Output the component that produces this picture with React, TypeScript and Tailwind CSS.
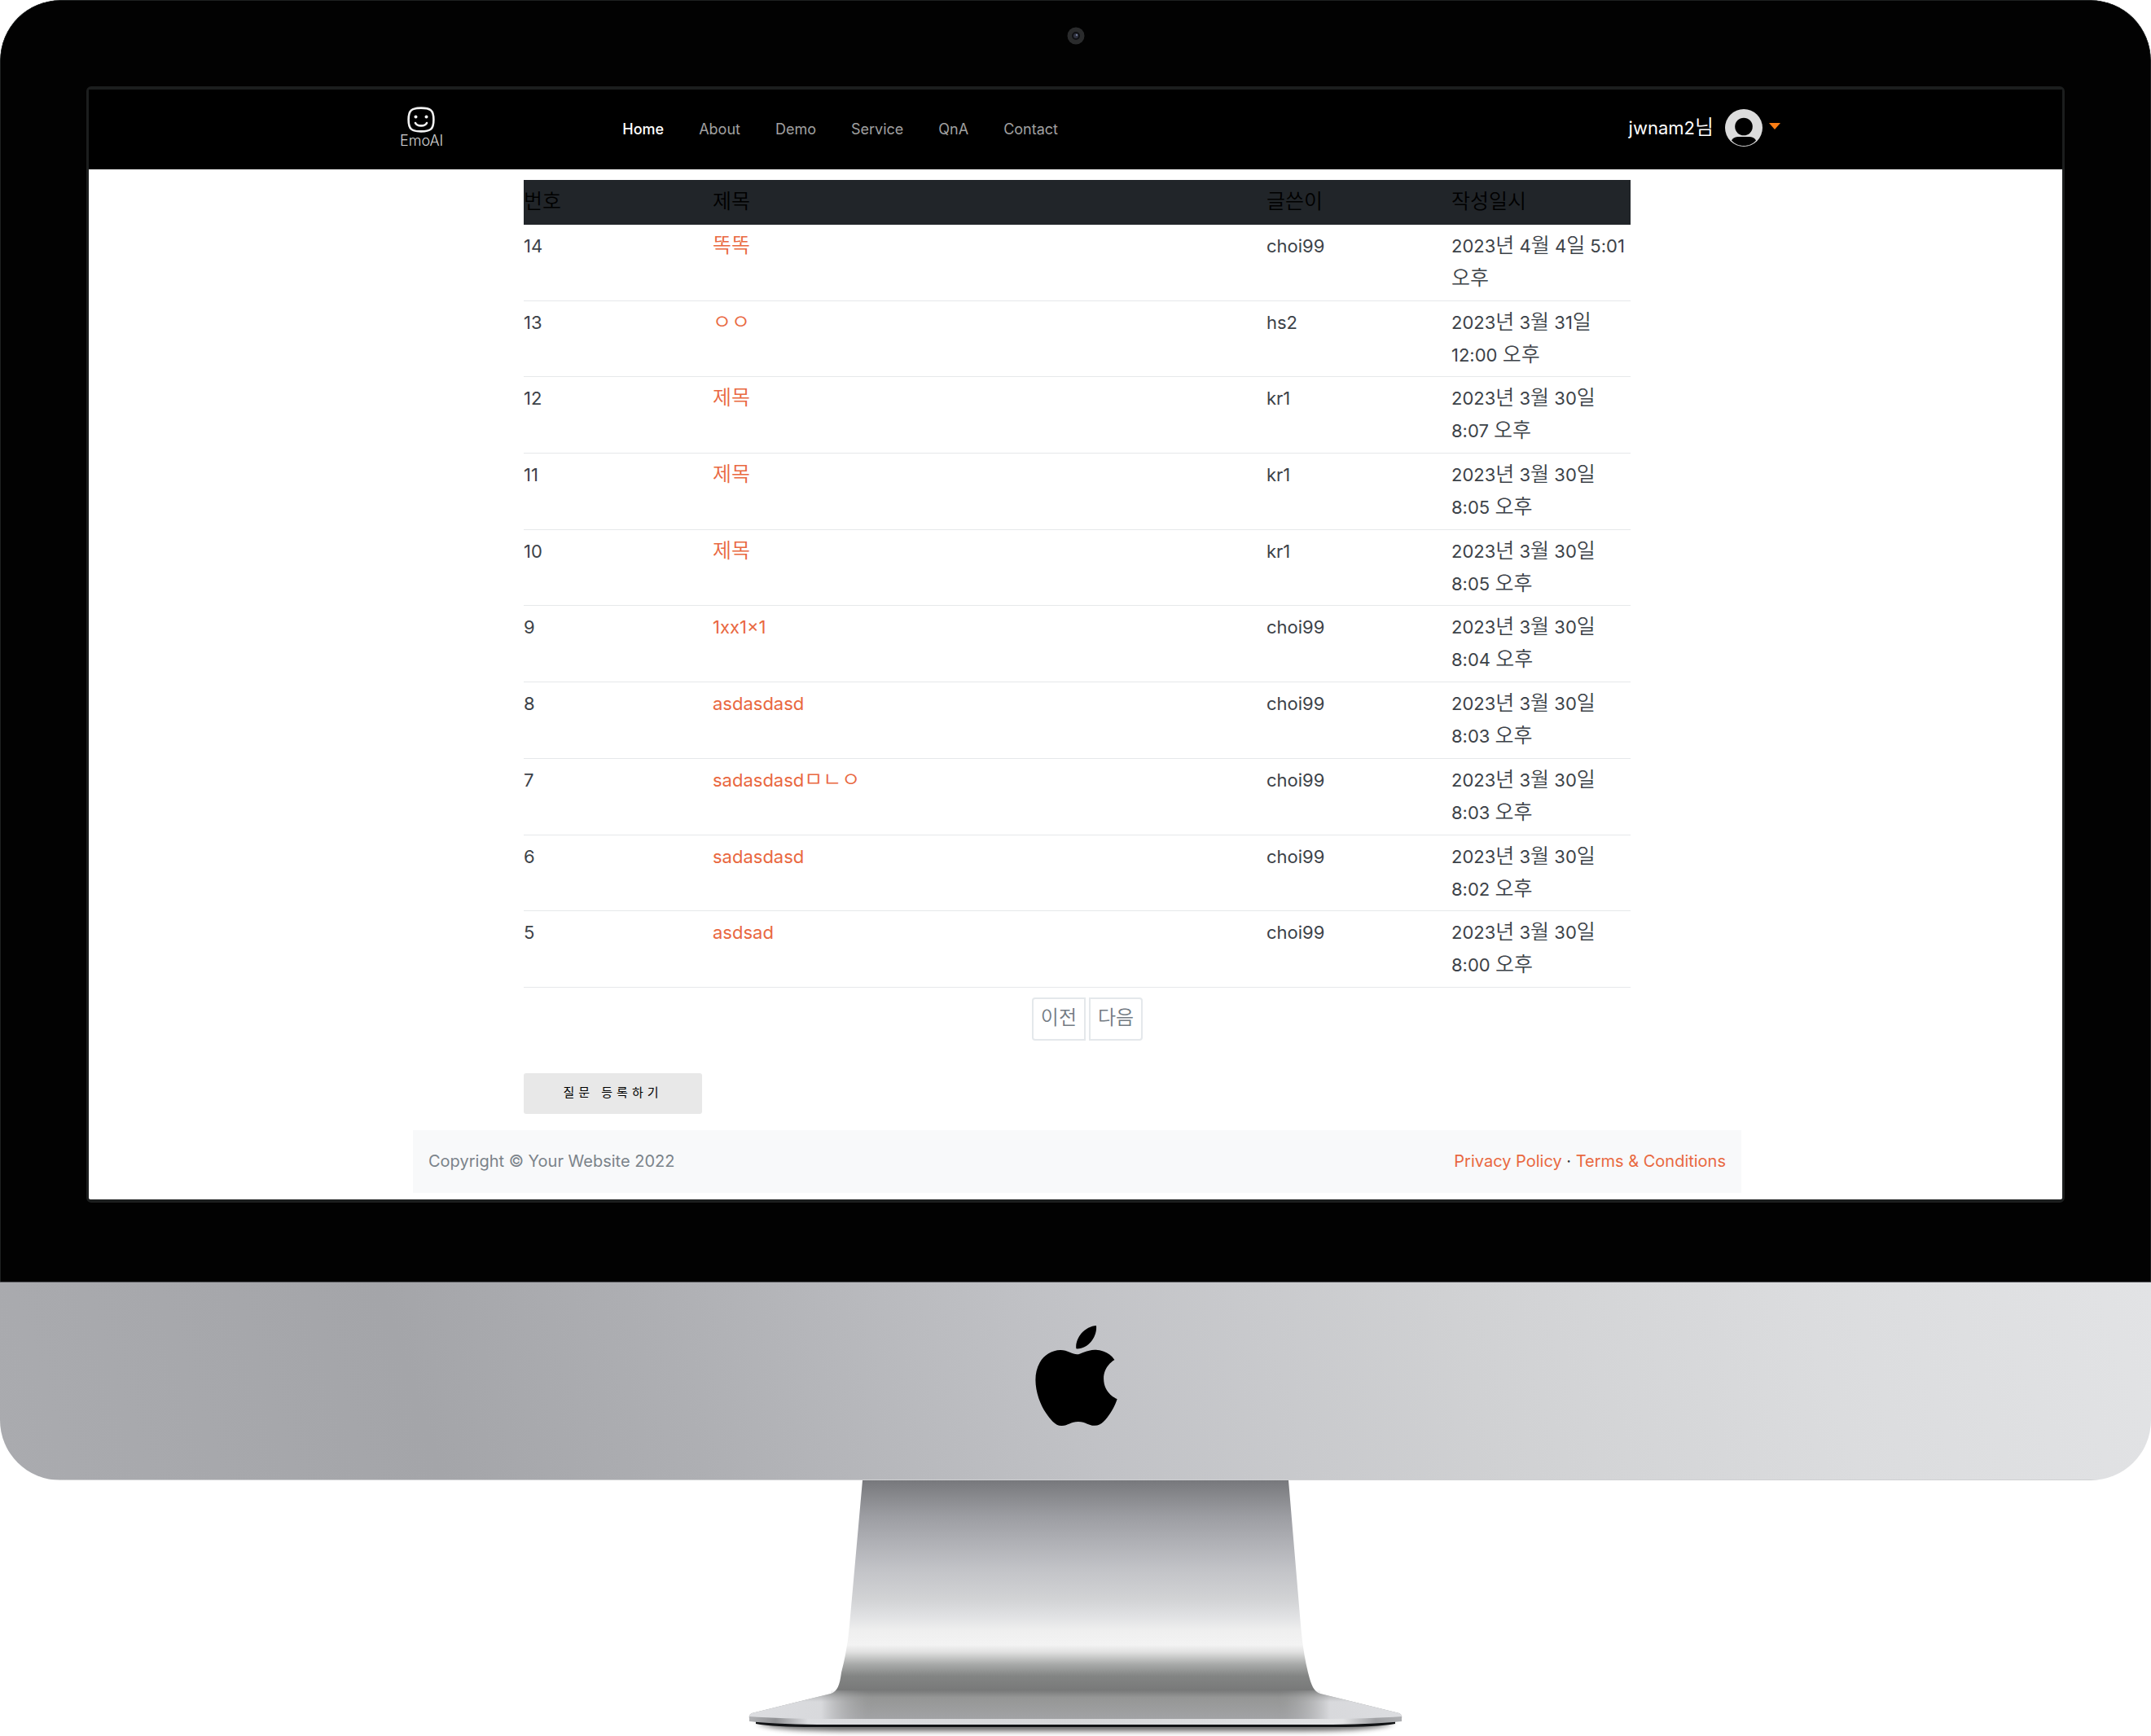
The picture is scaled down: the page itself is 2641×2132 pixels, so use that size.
import React from "react";
import { SiApple } from "react-icons/si";

type Post = { id: number; title: string; author: string; date: string };

const posts: Post[] = [
  { id: 14, title: "똑똑", author: "choi99", date: "2023년 4월 4일 5:01 오후" },
  { id: 13, title: "ㅇㅇ", author: "hs2", date: "2023년 3월 31일 12:00 오후" },
  { id: 12, title: "제목", author: "kr1", date: "2023년 3월 30일 8:07 오후" },
  { id: 11, title: "제목", author: "kr1", date: "2023년 3월 30일 8:05 오후" },
  { id: 10, title: "제목", author: "kr1", date: "2023년 3월 30일 8:05 오후" },
  { id: 9, title: "1xx1×1", author: "choi99", date: "2023년 3월 30일 8:04 오후" },
  { id: 8, title: "asdasdasd", author: "choi99", date: "2023년 3월 30일 8:03 오후" },
  { id: 7, title: "sadasdasdㅁㄴㅇ", author: "choi99", date: "2023년 3월 30일 8:03 오후" },
  { id: 6, title: "sadasdasd", author: "choi99", date: "2023년 3월 30일 8:02 오후" },
  { id: 5, title: "asdsad", author: "choi99", date: "2023년 3월 30일 8:00 오후" },
];

const navItems = ["Home", "About", "Demo", "Service", "QnA", "Contact"];

/* Sets Hangul runs slightly larger than the Latin text around them. */
function Mixed({ text }: { text: string }) {
  return (
    <>
      {text.split(/([ㄱ-ㅎ가-힣]+)/).map((part, i) =>
        i % 2 ? (
          <span key={i} className="text-[25px] leading-none font-[350]">
            {part}
          </span>
        ) : (
          part
        ),
      )}
    </>
  );
}

function Logo() {
  return (
    <a href="#home" className="flex flex-col items-center text-[#d4d4d4]">
      <svg className="mr-0.5 h-8 w-9" viewBox="0 0 36 32" fill="none" stroke="#f2f2f2" strokeLinecap="round">
        <path
          strokeWidth="2.6"
          d="M18 1.6c11.5 0 15.4 2.6 15.4 14.4S29.500 30.400 18 30.400 2.600 27.800 2.600 16 6.500 1.600 18 1.600Z"
        />
        <circle cx="11.500" cy="12.500" r="2" fill="#f2f2f2" stroke="none" />
        <circle cx="24.500" cy="12.500" r="2" fill="#f2f2f2" stroke="none" />
        <path strokeWidth="2.600" d="M11 20c2 4.500 12 4.500 14 0" />
      </svg>
      <span className="text-lg leading-5 font-light">EmoAI</span>
    </a>
  );
}

function Avatar() {
  return (
    <svg className="size-[46px]" viewBox="0 0 46 46">
      <circle cx="23" cy="23" r="23" fill="#dcdcdc" />
      <circle cx="23" cy="21.500" r="10.800" fill="#000" />
      <path d="M8 38.500c2-3.500 5-4.500 9-4.500h12c4 0 7 1 9 4.500C34 43 28.500 45 23 45S12 43 8 38.500Z" fill="#000" />
    </svg>
  );
}

function Header() {
  return (
    <header className="flex h-[98px] items-center bg-black pr-[346px] pb-1 pl-[382px]">
      <Logo />
      <nav className="ml-[220px] flex gap-[43px] pt-1 text-lg">
        {navItems.map((item, i) => (
          <a key={item} href={`#${item}`} className={i === 0 ? "font-medium text-white" : "text-[#a0a0a0]"}>
            {item}
          </a>
        ))}
      </nav>
      <button type="button" className="ml-auto flex items-center text-[22px] text-white">
        <span>
          <Mixed text="jwnam2님" />
        </span>
        <span className="mr-2 ml-3.5">
          <Avatar />
        </span>
        <svg className="mb-1 h-2 w-3.5" viewBox="0 0 14 8">
          <path d="M0 0h14L7 8Z" fill="#fd7e14" />
        </svg>
      </button>
    </header>
  );
}

function Board() {
  return (
    <table className="h-[992px] w-full table-fixed text-left text-[22px] leading-10 break-keep text-[#3c4248]">
      <colgroup>
        <col className="w-[232px]" />
        <col />
        <col className="w-[227px]" />
        <col className="w-[220px]" />
      </colgroup>
      <thead className="bg-[#212529] text-[25px] text-black">
        <tr className="h-[55px]">
          {["번호", "제목", "글쓴이", "작성일시"].map((h) => (
            <th key={h} scope="col" className="pb-1 font-[350]">
              {h}
            </th>
          ))}
        </tr>
      </thead>
      <tbody>
        {posts.map((p) => (
          <tr key={p.id} className="border-b border-[#e6e8ea] align-top">
            <td className="pt-1.5">{p.id}</td>
            <td className="pt-1.5">
              <a href={`#post-${p.id}`} className="text-[#e9683f]">
                <Mixed text={p.title} />
              </a>
            </td>
            <td className="pt-1.5">{p.author}</td>
            <td className="pt-1.5">
              <Mixed text={p.date} />
            </td>
          </tr>
        ))}
      </tbody>
    </table>
  );
}

function Screen() {
  return (
    <div className="rounded-md border-x-[3px] border-y-4 border-[#1c1e1e] bg-white">
      <Header />
      <div className="mx-auto max-w-[1635px] pt-[13px] pb-2 pl-1">
        <main className="px-[136px]">
          <Board />
          <div className="mt-3 flex justify-center gap-1 pl-[25px] text-2xl text-[#737b83]">
            <button type="button" className="h-[53px] rounded-l-sm border-2 border-[#e4e8eb] px-[9px] pb-1 font-[350]">
              이전
            </button>
            <button type="button" className="h-[53px] rounded-r-sm border-2 border-[#e4e8eb] px-[9px] pb-1 font-[350]">
              다음
            </button>
          </div>
          <button
            type="button"
            className="mt-10 mb-5 block h-[50px] w-[219px] rounded-[3px] bg-[#e8e8e8] pb-0.5 text-[15px] tracking-[5px] text-black"
          >
            질문 등록하기
          </button>
        </main>
        <footer className="flex h-[77px] items-center justify-between bg-[#f8f9fa] px-[19px] pb-0.5 text-xl">
          <p className="text-[#7b838a]">Copyright © Your Website 2022</p>
          <p className="text-[#343a40]">
            <a href="#privacy" className="text-[#e9683f]">Privacy Policy</a>
            {" · "}
            <a href="#terms" className="text-[#e9683f]">Terms &amp; Conditions</a>
          </p>
        </footer>
      </div>
    </div>
  );
}

function Stand() {
  return (
    <svg className="mx-auto block w-[841px]" viewBox="0 0 841 314" aria-hidden="true">
      <defs>
        <linearGradient id="neck" gradientUnits="userSpaceOnUse" x1="0" y1="0" x2="0" y2="293">
          <stop offset="0" stopColor="#77787c" />
          <stop offset="0.075" stopColor="#8a8b8f" />
          <stop offset="0.150" stopColor="#9c9da2" />
          <stop offset="0.270" stopColor="#b1b2b7" />
          <stop offset="0.380" stopColor="#c3c4c8" />
          <stop offset="0.500" stopColor="#d2d3d5" />
          <stop offset="0.570" stopColor="#e0e1e3" />
          <stop offset="0.630" stopColor="#efefef" />
          <stop offset="0.690" stopColor="#f3f3f3" />
          <stop offset="0.720" stopColor="#e0e0e0" />
          <stop offset="0.770" stopColor="#a9abaa" />
          <stop offset="0.820" stopColor="#838584" />
          <stop offset="0.880" stopColor="#787979" />
          <stop offset="0.910" stopColor="#959695" />
          <stop offset="1" stopColor="#a2a3a5" />
        </linearGradient>
        <linearGradient id="sides" gradientUnits="userSpaceOnUse" x1="20" y1="0" x2="821" y2="0">
          <stop offset="0" stopColor="#dcdde0" />
          <stop offset="0.110" stopColor="#d8d9dc" />
          <stop offset="0.190" stopColor="#a2a3a5" stopOpacity="0" />
          <stop offset="0.810" stopColor="#a2a3a5" stopOpacity="0" />
          <stop offset="0.890" stopColor="#d8d9dc" />
          <stop offset="1" stopColor="#dcdde0" />
        </linearGradient>
        <linearGradient id="sideFade" gradientUnits="userSpaceOnUse" x1="0" y1="254" x2="0" y2="272">
          <stop offset="0" stopColor="#000" />
          <stop offset="1" stopColor="#fff" />
        </linearGradient>
        <mask id="sideMask">
          <rect width="841" height="314" fill="url(#sideFade)" />
        </mask>
        <linearGradient id="lip" x1="0" x2="1">
          <stop offset="0" stopColor="#b0b1b4" />
          <stop offset="0.040" stopColor="#909194" />
          <stop offset="0.090" stopColor="#dcdde0" />
          <stop offset="0.500" stopColor="#d6d7d9" />
          <stop offset="0.910" stopColor="#e2e3e5" />
          <stop offset="0.960" stopColor="#a0a1a4" />
          <stop offset="1" stopColor="#aeafb2" />
        </linearGradient>
        <filter id="soft" x="-5%" y="-100%" width="110%" height="300%">
          <feGaussianBlur stdDeviation="3" />
        </filter>
      </defs>
      <path d="M28 298H813C790 307 740 308 680 308H160C100 308 50 307 28 298Z" fill="#000" opacity="0.600" filter="url(#soft)" />
      <path d="M28 296H813V299Q790 303 740 303H100Q50 303 28 299Z" fill="#111315" />
      <path
        d="M159 0H682L697 178Q700 212 706 236C710 252 713 259 721 262L818 286Q822 288 821 292L780 294H60L20 292Q19 288 23 286L120 262C128 259 131 252 133 236Q141 205 143 178Z"
        fill="url(#neck)"
      />
      <path
        d="M120 258H721V262L818 286Q822 288 821 292L780 294H60L20 292Q19 288 23 286L120 262Z"
        fill="url(#sides)"
        mask="url(#sideMask)"
      />
      <path d="M20 290Q60 293 120 293H721Q781 293 821 290V296Q781 300 721 300H120Q60 300 20 296Z" fill="url(#lip)" />
    </svg>
  );
}

export default function App() {
  return (
    <div className="bg-white font-[Inter,'Noto_Sans_CJK_KR',sans-serif]">
      <div className="overflow-hidden rounded-[74px]">
        <div className="rounded-t-[74px] border-x border-t border-[#1e2020] bg-[#020202] px-[105px] pb-[97px]">
          <div className="flex h-[105px] items-start justify-center pt-8">
            <svg className="size-[22px]" viewBox="0 0 22 22" aria-hidden="true">
              <circle cx="11" cy="11" r="10.500" fill="#2a2b2c" />
              <circle cx="11" cy="11" r="5" fill="#101114" />
              <circle cx="11" cy="11" r="3" fill="#30323f" />
              <circle cx="12" cy="10" r="1.200" fill="#6d7896" />
            </svg>
          </div>
          <Screen />
        </div>
        <div className="flex h-[244px] items-start justify-center border-t border-b border-t-[#55565a] border-b-[#cfd0d2] bg-linear-[72deg,#aaabaf_0%,#a4a5a9_20%,#aeafb3_32%,#c1c2c6_50%,#d0d1d3_68%,#dbdcde_84%,#e2e3e5_100%] pt-[53px] pl-0.5">
          <SiApple className="size-[123px] text-black" aria-label="Apple" />
        </div>
      </div>
      <Stand />
    </div>
  );
}
